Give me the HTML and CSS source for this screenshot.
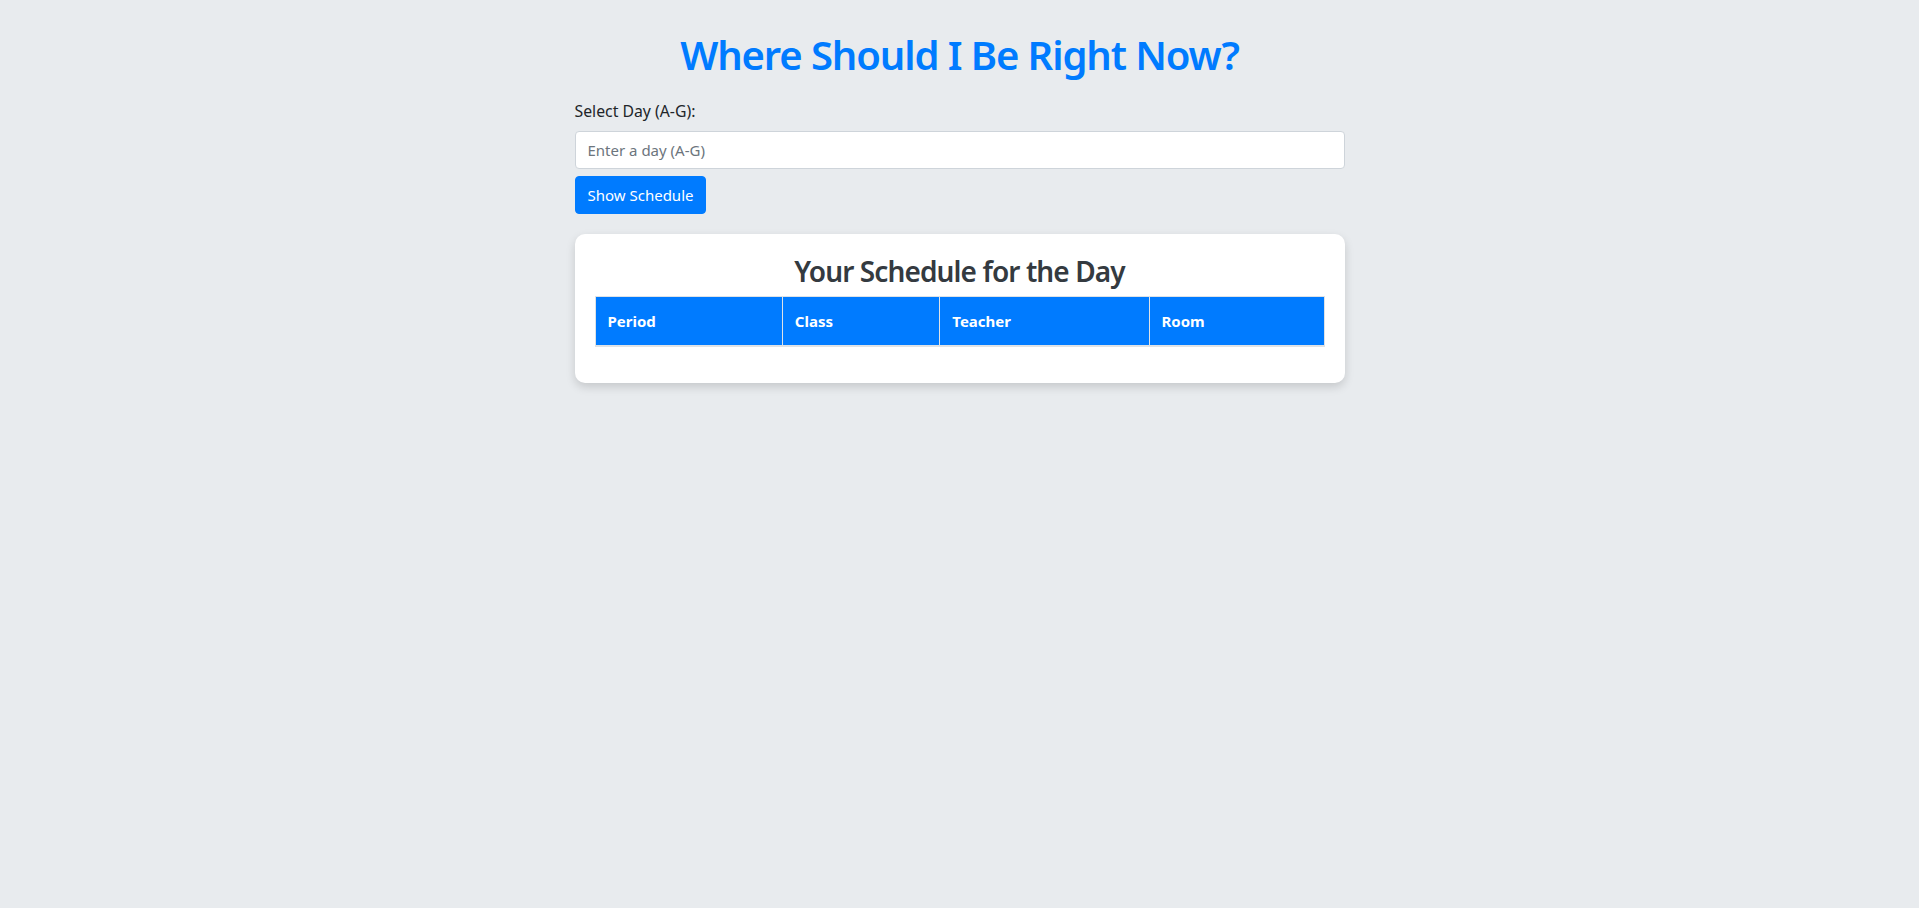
FILE: index.html
```html
<!DOCTYPE html>
<html lang="en">
<head>
<meta charset="utf-8">
<title>Where Should I Be Right Now?</title>
<link rel="stylesheet" href="styles.css">
</head>
<body>
<div class="container">
  <h1 class="page-title">Where Should I Be Right Now?</h1>
  <label class="field-label" for="day">Select Day (A-G):</label>
  <input class="field-input" id="day" type="text" placeholder="Enter a day (A-G)">
  <button class="btn-primary" type="button">Show Schedule</button>
  <div class="card">
    <h2 class="card-title">Your Schedule for the Day</h2>
    <table class="schedule">
      <thead>
        <tr>
          <th class="col-period">Period</th>
          <th class="col-class">Class</th>
          <th class="col-teacher">Teacher</th>
          <th class="col-room">Room</th>
        </tr>
      </thead>
      <tbody></tbody>
    </table>
  </div>
</div>
</body>
</html>
```

FILE: styles.css
```css
* { box-sizing: border-box; }
html, body { margin: 0; padding: 0; }
body {
  background: #e8ebee;
  font-family: "Noto Sans", "Open Sans", sans-serif;
  font-size: 16px;
  line-height: 1.5;
  color: #212529;
}
.container {
  max-width: 800px;
  margin: 0 auto;
  padding: 31px 15px 20px;
  display: flex;
  flex-direction: column;
  align-items: flex-start;
}
.page-title {
  align-self: stretch;
  margin: 0 0 20px;
  text-align: center;
  color: #007bff;
  font-size: 40px;
  font-weight: 600;
  letter-spacing: -1.1px;
  line-height: 48px;
}
.field-label {
  font-size: 15.8px;
  line-height: 24px;
  margin-bottom: 8px;
}
.field-input {
  align-self: stretch;
  height: 38px;
  padding: 6px 12px;
  font-family: inherit;
  font-size: 15px;
  color: #495057;
  background: #fff;
  border: 1px solid #ced4da;
  border-radius: 4px;
  margin: 0 0 7px;
}
.field-input::placeholder { color: #6c757d; }
.btn-primary {
  height: 38px;
  padding: 6px 12px;
  font-family: inherit;
  font-size: 15px;
  color: #fff;
  background: #007bff;
  border: 1px solid #007bff;
  border-radius: 4px;
  margin: 0 0 20px;
}
.card {
  align-self: stretch;
  background: #fff;
  border-radius: 10px;
  box-shadow: 0 4px 10px rgba(0, 0, 0, 0.15);
  padding: 20px 20px 20px;
}
.card-title {
  margin: 0 0 8px;
  text-align: center;
  font-size: 28px;
  font-weight: 600;
  letter-spacing: -0.9px;
  line-height: 34px;
  color: #343a40;
}
.schedule {
  width: 100%;
  border-collapse: collapse;
  margin-bottom: 16px;
  table-layout: fixed;
}
.schedule th {
  background: #007bff;
  color: #fff;
  text-align: left;
  font-weight: 700;
  font-size: 15px;
  padding: 12px;
  line-height: 24px;
  border: 1px solid #dee2e6;
  border-bottom-width: 2px;
}
.col-period { width: 25.7%; }
.col-class { width: 21.6%; }
.col-teacher { width: 28.7%; }
.col-room { width: 24%; }
```
